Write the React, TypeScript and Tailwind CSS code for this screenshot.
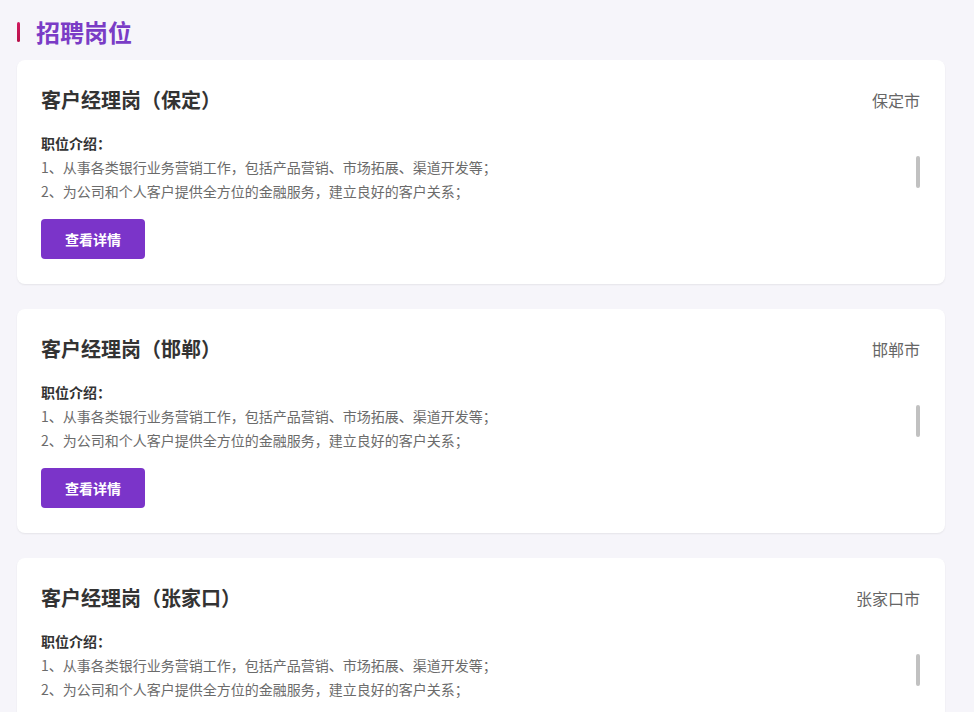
import React from "react";

const jobs = [
  { id: 1, title: "客户经理岗（保定）", city: "保定市" },
  { id: 2, title: "客户经理岗（邯郸）", city: "邯郸市" },
  { id: 3, title: "客户经理岗（张家口）", city: "张家口市" },
];

const duties = [
  "1、从事各类银行业务营销工作，包括产品营销、市场拓展、渠道开发等；",
  "2、为公司和个人客户提供全方位的金融服务，建立良好的客户关系；",
];

const font = { fontFamily: '"Noto Sans CJK SC", "Noto Sans", sans-serif' };

const App: React.FC = () => {
  return (
    <div className="min-h-screen bg-[#f6f5fa] px-[17px] pt-4 pb-8" style={font}>
      {/* heading */}
      <div className="flex items-center h-8">
        <span className="w-[3px] h-5 rounded-full bg-gradient-to-b from-[#d0195e] to-[#b8124a]" />
        <h1 className="ml-4 text-2xl leading-8 font-bold text-[#7a3cc6]">招聘岗位</h1>
      </div>

      <div className="mt-3 flex flex-col gap-[25px] w-[928px]">
        {jobs.map((job) => (
          <div
            key={job.id}
            className="bg-white rounded-lg shadow-[0_1px_2px_rgba(0,0,0,0.07)] pl-6 pr-[25px] pt-[26px] pb-[25px]"
          >
            <div className="flex justify-between items-center h-7">
              <h2 className="text-xl leading-7 font-bold text-[#333]">{job.title}</h2>
              <span className="text-base text-[#666]">{job.city}</span>
            </div>

            <div className="mt-[17px] flex justify-between">
              <div>
                <p className="text-sm leading-6 font-bold text-[#333]">职位介绍：</p>
                {duties.map((d) => (
                  <p key={d} className="text-sm leading-6 text-[#6b6b6b]">
                    {d}
                  </p>
                ))}
              </div>
              <div className="w-1 h-8 mt-[25px] rounded-full bg-[#c1c1c1]" />
            </div>

            <button className="mt-4 w-[104px] h-10 rounded bg-[#7b34c9] text-white text-sm font-bold">
              查看详情
            </button>
          </div>
        ))}
      </div>
    </div>
  );
};

export default App;
